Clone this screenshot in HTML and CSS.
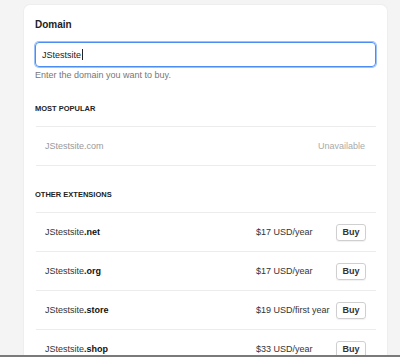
FILE: index.html
```html
<!DOCTYPE html>
<html>
<head>
	<meta charset="utf-8">
	<title>Domain</title>
	<link rel="stylesheet" href="styles.css">
</head>
<body>
	<div class="card">
		<h2 class="title">Domain</h2>
		<div class="field">JStestsite<span class="caret"></span></div>
		<p class="help">Enter the domain you want to buy.</p>

		<h3 class="label">MOST POPULAR</h3>
		<ul class="list">
			<li class="row off">
				<span class="name">JStestsite.com</span>
				<span class="status">Unavailable</span>
			</li>
		</ul>

		<h3 class="label">OTHER EXTENSIONS</h3>
		<ul class="list">
			<li class="row">
				<span class="name">JStestsite<b>.net</b></span>
				<span class="price">$17 USD/year</span>
				<a class="buy" href="javascript:">Buy</a>
			</li>
			<li class="row">
				<span class="name">JStestsite<b>.org</b></span>
				<span class="price">$17 USD/year</span>
				<a class="buy" href="javascript:">Buy</a>
			</li>
			<li class="row">
				<span class="name">JStestsite<b>.store</b></span>
				<span class="price">$19 USD/first year</span>
				<a class="buy" href="javascript:">Buy</a>
			</li>
			<li class="row">
				<span class="name">JStestsite<b>.shop</b></span>
				<span class="price">$33 USD/year</span>
				<a class="buy" href="javascript:">Buy</a>
			</li>
		</ul>
	</div>
	<div class="frame"></div>
</body>
</html>
```

FILE: styles.css
```css
*{
	margin: 0;
	padding: 0;
	box-sizing: border-box;
}
body{
	background: #f4f4f4;
	font-family: "Liberation Sans", Arial, sans-serif;
	color: #333;
	height: 361px;
	overflow: hidden;
}
.card{
	background: #fff;
	width: 363px;
	margin: 5px 0 0 24px;
	padding: 12px 11px 0;
	border-radius: 6px;
	box-shadow: 0 0 0 1px #eeeeee;
}
.title{
	font-size: 10px;
	line-height: 16px;
	font-weight: 700;
	color: #222;
}
.field{
	margin-top: 9px;
	height: 25px;
	border: 1px solid #4a8ef5;
	box-shadow: 0 0 0 1px #9cc2fb;
	border-radius: 4px;
	padding-left: 6px;
	font-size: 9px;
	color: #222;
	display: flex;
	align-items: center;
}
.caret{
	display: inline-block;
	width: 1px;
	height: 11px;
	background: #222;
	margin-left: 1px;
}
.help{
	margin-top: 1px;
	font-size: 9px;
	line-height: 14px;
	color: #777;
}
.label{
	padding: 23px 0 11px;
	font-size: 7.5px;
	line-height: 12px;
	font-weight: 700;
	color: #222;
}
.help + .label{
	padding-top: 21px;
}
.list{
	list-style: none;
	border-top: 1px solid #ececec;
	margin-left: 1px;
}
.row{
	display: grid;
	grid-template-columns: 1fr 80px 30px;
	align-items: center;
	height: 39px;
	padding: 0 10px 0 9px;
	border-bottom: 1px solid #ececec;
	font-size: 9px;
	color: #333;
}
.name b{
	font-weight: 700;
	color: #111;
}
.off{
	grid-template-columns: 1fr auto;
	padding-right: 11px;
	color: #999;
}
.status{
	color: #aaa;
}
.price{
	color: #333;
}
.buy{
	display: block;
	height: 17px;
	line-height: 15px;
	text-align: center;
	border: 1px solid #cfcfcf;
	border-radius: 3px;
	font-size: 9px;
	font-weight: 700;
	color: #333;
	text-decoration: none;
	box-shadow: 0 1px 1px rgba(0,0,0,.06);
}
.frame{
	position: fixed;
	left: 0;
	right: 0;
	bottom: 0;
	height: 6px;
	background: #fff;
	border-top: 2px solid #7a7a7a;
}
```
